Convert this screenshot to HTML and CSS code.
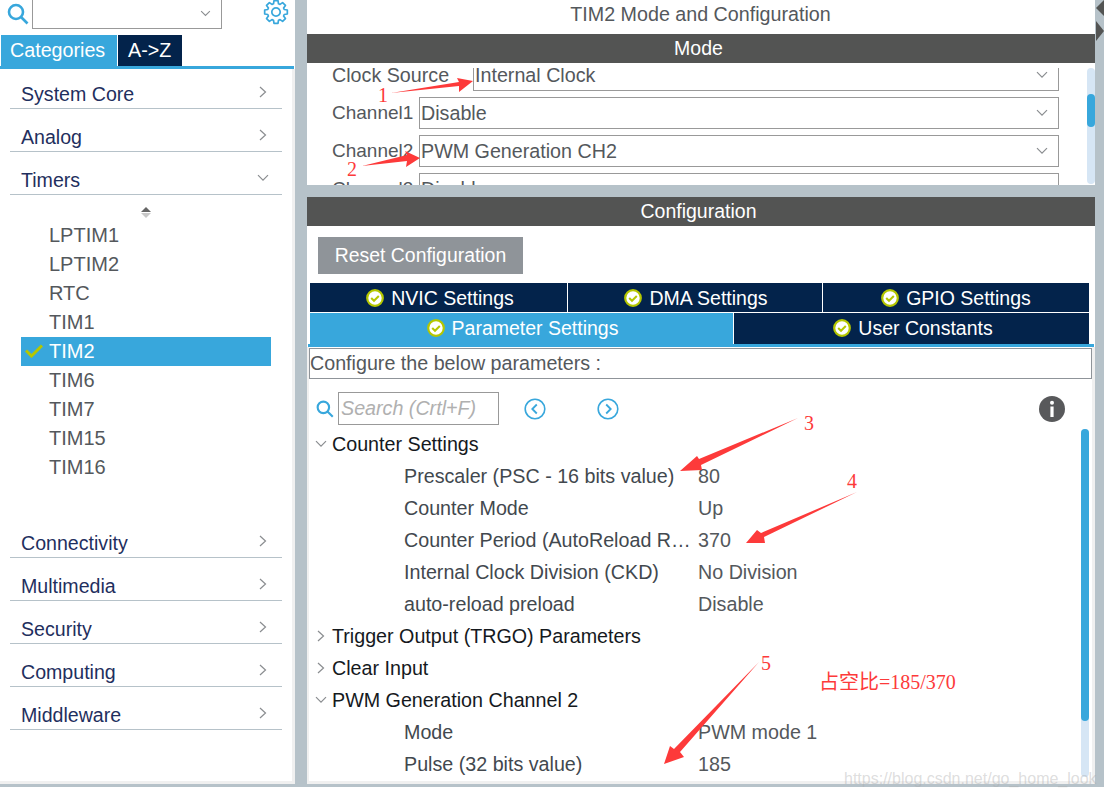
FILE: index.html
```html
<!DOCTYPE html>
<html lang="en">
<head>
    <meta charset="UTF-8">
    <meta name="viewport" content="width=device-width, initial-scale=1.0">
    <title>TIM2 Mode and Configuration</title>
    <link rel="stylesheet" href="styles.css">
</head>
<body>

    <!-- Shared icons -->
    <svg class="icon-defs" aria-hidden="true">
        <symbol id="chev-right" viewBox="0 0 8 12"><path d="M1 1l5.5 5L1 11" fill="none" stroke="#8a8d90" stroke-width="1.2"/></symbol>
        <symbol id="chev-down" viewBox="0 0 12 8"><path d="M1 1.2l5 5 5-5" fill="none" stroke="#8a8d90" stroke-width="1.2"/></symbol>
        <symbol id="ok" viewBox="0 0 18 18"><circle cx="9" cy="9" r="7.8" fill="#fff" stroke="#b5c700" stroke-width="2.2"/><path d="M5.2 9l2.8 2.8 4.8-4.8" fill="none" stroke="#b5c700" stroke-width="2"/></symbol>
        <symbol id="lens" viewBox="0 0 22 22"><circle cx="9" cy="9" r="7" fill="none" stroke="#38a7dc" stroke-width="2.6"/><path d="M14 14l6.5 6.5" stroke="#38a7dc" stroke-width="2.6"/></symbol>
    </svg>

    <div class="app">

        <!-- Left: categories -->
        <div class="sidebar">
            <div class="search-top">
                <svg class="lens-big"><use href="#lens"/></svg>
                <div class="combo">
                    <svg class="combo-chev"><use href="#chev-down"/></svg>
                </div>
                <svg class="gear" viewBox="-13 -13 26 26">
                    <polygon points="-2.51,-8.22 -2,-11.33 2,-11.33 2.51,-8.22 4.04,-7.59 6.6,-9.43 9.43,-6.6 7.59,-4.04 8.22,-2.51 11.33,-2 11.33,2 8.22,2.51 7.59,4.04 9.43,6.6 6.6,9.43 4.04,7.59 2.51,8.22 2,11.33 -2,11.33 -2.51,8.22 -4.04,7.59 -6.6,9.43 -9.43,6.6 -7.59,4.04 -8.22,2.51 -11.33,2 -11.33,-2 -8.22,-2.51 -7.59,-4.04 -9.43,-6.6 -6.6,-9.43 -4.04,-7.59" fill="none" stroke="#38a7dc" stroke-width="1.7" stroke-linejoin="round"/>
                    <circle r="4.2" fill="none" stroke="#38a7dc" stroke-width="1.7"/>
                </svg>
            </div>
            <div class="side-tabs">
                <div class="side-tab active">Categories</div>
                <div class="side-tab">A-&gt;Z</div>
            </div>
            <div class="blue-line"></div>

            <div class="cat-row"><span>System Core</span><svg class="chev-r"><use href="#chev-right"/></svg></div>
            <div class="cat-row"><span>Analog</span><svg class="chev-r"><use href="#chev-right"/></svg></div>
            <div class="cat-row"><span>Timers</span><svg class="chev-d"><use href="#chev-down"/></svg></div>

            <div class="timer-list">
                <div class="sort-icon"></div>
                <div class="timer">LPTIM1</div>
                <div class="timer">LPTIM2</div>
                <div class="timer">RTC</div>
                <div class="timer">TIM1</div>
                <div class="timer selected">
                    <svg class="tick" viewBox="0 0 18 14"><path d="M1 6.5l5.5 5.5L17 1.5" fill="none" stroke="#b5c700" stroke-width="3"/></svg>
                    TIM2
                </div>
                <div class="timer">TIM6</div>
                <div class="timer">TIM7</div>
                <div class="timer">TIM15</div>
                <div class="timer">TIM16</div>
            </div>

            <div class="cat-row"><span>Connectivity</span><svg class="chev-r"><use href="#chev-right"/></svg></div>
            <div class="cat-row"><span>Multimedia</span><svg class="chev-r"><use href="#chev-right"/></svg></div>
            <div class="cat-row"><span>Security</span><svg class="chev-r"><use href="#chev-right"/></svg></div>
            <div class="cat-row"><span>Computing</span><svg class="chev-r"><use href="#chev-right"/></svg></div>
            <div class="cat-row"><span>Middleware</span><svg class="chev-r"><use href="#chev-right"/></svg></div>
        </div>

        <!-- Right: mode and configuration -->
        <div class="main">
            <div class="title">TIM2 Mode and Configuration</div>
            <div class="bar">Mode</div>

            <div class="mode-pane">
                <div class="mode-scroll">
                    <div class="mode-row">
                        <div class="mode-label wide">Clock Source</div>
                        <div class="select">Internal Clock<svg class="select-chev"><use href="#chev-down"/></svg></div>
                    </div>
                    <div class="mode-row">
                        <div class="mode-label">Channel1</div>
                        <div class="select">Disable<svg class="select-chev"><use href="#chev-down"/></svg></div>
                    </div>
                    <div class="mode-row">
                        <div class="mode-label">Channel2</div>
                        <div class="select">PWM Generation CH2<svg class="select-chev"><use href="#chev-down"/></svg></div>
                    </div>
                    <div class="mode-row">
                        <div class="mode-label">Channel3</div>
                        <div class="select">Disable<svg class="select-chev"><use href="#chev-down"/></svg></div>
                    </div>
                </div>
                <div class="mode-track"><div class="mode-thumb"></div></div>
            </div>

            <div class="bar config-bar">Configuration</div>

            <div class="config">
                <div class="reset-btn">Reset Configuration</div>

                <div class="tabs">
                    <div class="tab-row first">
                        <div class="tab nvic"><svg class="ok"><use href="#ok"/></svg>NVIC Settings</div>
                        <div class="tab dma"><svg class="ok"><use href="#ok"/></svg>DMA Settings</div>
                        <div class="tab gpio"><svg class="ok"><use href="#ok"/></svg>GPIO Settings</div>
                    </div>
                    <div class="tab-row">
                        <div class="tab param active"><svg class="ok"><use href="#ok"/></svg>Parameter Settings</div>
                        <div class="tab user"><svg class="ok"><use href="#ok"/></svg>User Constants</div>
                    </div>
                </div>
                <div class="tab-line"></div>

                <div class="config-body">
                    <div class="hint">Configure the below parameters :</div>

                    <div class="search-row">
                        <svg class="lens-small"><use href="#lens"/></svg>
                        <div class="search-box">Search (Crtl+F)</div>
                        <svg class="nav first-nav" viewBox="0 0 22 22"><circle cx="11" cy="11" r="9.8" fill="none" stroke="#38a7dc" stroke-width="1.6"/><path d="M12.8 6.5L8.3 11l4.5 4.5" fill="none" stroke="#38a7dc" stroke-width="1.8"/></svg>
                        <svg class="nav" viewBox="0 0 22 22"><circle cx="11" cy="11" r="9.8" fill="none" stroke="#38a7dc" stroke-width="1.6"/><path d="M9.2 6.5l4.5 4.5-4.5 4.5" fill="none" stroke="#38a7dc" stroke-width="1.8"/></svg>
                        <svg class="info" viewBox="0 0 26 26"><circle cx="13" cy="13" r="13" fill="#58595b"/><circle cx="13" cy="6.8" r="2" fill="#fff"/><rect x="11.4" y="10.5" width="3.2" height="10.5" fill="#fff"/></svg>
                    </div>

                    <div class="tree">
                        <div class="group"><svg class="t-down"><use href="#chev-down"/></svg>Counter Settings</div>
                        <div class="param-row"><div class="param-name">Prescaler (PSC - 16 bits value)</div><div>80</div></div>
                        <div class="param-row"><div class="param-name">Counter Mode</div><div>Up</div></div>
                        <div class="param-row"><div class="param-name">Counter Period (AutoReload Register)</div><div>370</div></div>
                        <div class="param-row"><div class="param-name">Internal Clock Division (CKD)</div><div>No Division</div></div>
                        <div class="param-row"><div class="param-name">auto-reload preload</div><div>Disable</div></div>
                        <div class="group"><svg class="t-right"><use href="#chev-right"/></svg>Trigger Output (TRGO) Parameters</div>
                        <div class="group"><svg class="t-right"><use href="#chev-right"/></svg>Clear Input</div>
                        <div class="group"><svg class="t-down"><use href="#chev-down"/></svg>PWM Generation Channel 2</div>
                        <div class="param-row"><div class="param-name">Mode</div><div>PWM mode 1</div></div>
                        <div class="param-row"><div class="param-name">Pulse (32 bits value)</div><div>185</div></div>
                    </div>
                    <div class="tree-track"><div class="tree-thumb"></div></div>
                </div>
            </div>
        </div>

        <!-- Split handles -->
        <div class="handle-left"></div>
        <div class="handle-right"></div>
    </div>

    <!-- Red annotations drawn over the screenshot -->
    <svg class="marks" viewBox="0 0 1104 797">
        <g fill="#fd3a3a">
            <polygon points="391,93 459,82 457,78 473,81 459,92 459,86"/>
            <polygon points="362,166 407,155 405,151 420,158 406,167 407,161"/>
            <polygon points="798,418 699,459 697,456 680,471 702,470 701,465"/>
            <polygon points="857,492 761,533 757,530 746,543 765,543 764,537"/>
            <polygon points="759,662 674,749 670,746 664,764 684,757 680,752"/>
        </g>
    </svg>
    <span class="note n1">1</span>
    <span class="note n2">2</span>
    <span class="note n3">3</span>
    <span class="note n4">4</span>
    <span class="note n5">5</span>
    <span class="note duty">占空比=185/370</span>
    <span class="watermark">https://blog.csdn.net/go_home_look</span>

</body>
</html>
```

FILE: styles.css
```css
* {
    margin: 0;
    padding: 0;
    box-sizing: border-box;
}

body {
    position: relative;
    width: 1104px;
    height: 797px;
    overflow: hidden;
    background-color: #fff;
    font-family: 'Liberation Sans', Arial, sans-serif;
    font-size: 19.7px;
    color: #54585c;
}

.icon-defs {
    position: absolute;
    width: 0;
    height: 0;
}

.app {
    position: relative;
    display: flex;
    height: 787px;
    padding-bottom: 3px;
    background-color: #b6c2c9;
}

/* Sidebar */
.sidebar {
    width: 295px;
    margin-right: 12px;
    background: linear-gradient(#f0f0f0, #f0f0f0) right 69px / 3px 100% no-repeat #fff;
    border-bottom: 3px solid #f0f0f0;
}

.search-top {
    display: flex;
    height: 35px;
}

.lens-big {
    width: 22px;
    height: 22px;
    margin: 3px 0 0 7px;
}

.combo {
    position: relative;
    width: 190px;
    height: 30px;
    margin: -1px 0 0 3px;
    border: 1px solid #999;
}

.combo-chev {
    position: absolute;
    right: 10px;
    top: 10px;
    width: 11px;
    height: 7px;
}

.gear {
    width: 26px;
    height: 26px;
    margin: -1px 0 0 41px;
}

.side-tabs {
    display: flex;
    gap: 1px;
    height: 31px;
    padding-left: 1px;
}

.side-tab {
    width: 64px;
    padding-left: 10px;
    background-color: #03234b;
    color: #fff;
    line-height: 30px;
}

.side-tab.active {
    width: 116px;
    padding-left: 9px;
    background-color: #38a7dc;
}

.blue-line {
    width: 294px;
    height: 3px;
    background-color: #38a7dc;
}

.cat-row {
    display: flex;
    align-items: center;
    justify-content: space-between;
    height: 31px;
    margin: 12px 13px 0 10px;
    padding: 2px 15px 0 11px;
    border-bottom: 1px solid #b6c2c9;
    color: #1f2f5e;
    font-size: 19.6px;
}

.blue-line + .cat-row {
    margin-top: 9px;
}

.chev-r {
    width: 8px;
    height: 12px;
    margin-bottom: 5px;
}

.chev-d {
    width: 12px;
    height: 8px;
    margin: 0 -2px 5px 0;
}

.timer-list {
    width: 250px;
    margin: 0 0 45px 21px;
    font-size: 20px;
}

.sort-icon {
    position: relative;
    height: 26px;
}

.sort-icon::before,
.sort-icon::after {
    content: '';
    position: absolute;
    left: 120px;
    border-left: 5px solid transparent;
    border-right: 5px solid transparent;
}

.sort-icon::before {
    top: 12px;
    border-bottom: 5px solid #666;
}

.sort-icon::after {
    top: 18px;
    border-top: 5px solid #c8c8c8;
}

.timer {
    position: relative;
    height: 29px;
    padding-left: 28px;
    line-height: 28px;
}

.timer.selected {
    background-color: #38a7dc;
    color: #fff;
}

.tick {
    position: absolute;
    left: 4px;
    top: 7px;
    width: 18px;
    height: 14px;
}

/* Main column */
.main {
    display: flex;
    flex-direction: column;
    width: 788px;
}

.title {
    height: 34px;
    padding-right: 1px;
    background-color: #fff;
    text-align: center;
    line-height: 28px;
}

.bar {
    height: 29px;
    padding-right: 5px;
    background-color: #535453;
    color: #fff;
    text-align: center;
    font-size: 19.5px;
    line-height: 28px;
}

.mode-pane {
    position: relative;
    height: 122px;
    padding-top: 5px;
    background-color: #fff;
}

.mode-scroll {
    height: 117px;
    overflow: hidden;
    padding: 0 36px 0 25px;
}

.mode-row {
    display: flex;
    align-items: center;
    height: 32px;
    margin-bottom: 6px;
}

.mode-row:first-child {
    margin-top: -9px;
}

.mode-label {
    width: 87px;
    flex-shrink: 0;
    font-size: 19px;
}

.mode-label.wide {
    width: 141px;
    font-size: 19.7px;
}

.select {
    position: relative;
    flex: 1;
    height: 32px;
    padding-left: 1px;
    border: 1px solid #999;
    line-height: 30px;
}

.select-chev {
    position: absolute;
    right: 10px;
    top: 11px;
    width: 12px;
    height: 8px;
}

.mode-track {
    position: absolute;
    right: 0;
    top: 5px;
    width: 8px;
    height: 116px;
    border-radius: 4px;
    background-color: #d6e6f5;
}

.mode-thumb {
    height: 33px;
    margin-top: 26px;
    border-radius: 4px;
    background-color: #38a7dc;
}

.config-bar {
    margin-top: 12px;
}

/* Configuration */
.config {
    display: flex;
    flex-direction: column;
    flex: 1;
    overflow: hidden;
    background-color: #fff;
    border-bottom: 3px solid #f0f0f0;
}

.reset-btn {
    width: 205px;
    height: 37px;
    margin: 11px 0 9px 11px;
    background-color: #8f9499;
    color: #fff;
    text-align: center;
    font-size: 19.4px;
    line-height: 36px;
}

.tabs {
    display: flex;
    flex-direction: column;
    gap: 1px;
    width: 779px;
    margin-left: 3px;
    font-size: 19.5px;
}

.tab-row {
    display: flex;
    gap: 1px;
    height: 31px;
}

.tab-row.first {
    height: 29px;
}

.tab {
    display: flex;
    align-items: center;
    justify-content: center;
    gap: 7px;
    background-color: #03234b;
    color: #fff;
}

.tab-row.first .tab {
    padding-top: 2px;
}

.tab .ok {
    margin-top: -1px;
}

.tab.nvic { width: 257px; padding-left: 3px; }
.tab.dma { width: 254px; padding-left: 2px; }
.tab.gpio { width: 266px; }
.tab.param { width: 423px; padding-left: 2px; }
.tab.user { width: 355px; padding-left: 3px; }

.tab.active {
    background-color: #38a7dc;
}

.ok {
    width: 18px;
    height: 18px;
}

.tab-line {
    width: 786px;
    height: 3px;
    margin-left: 1px;
    background-color: #38a7dc;
}

.config-body {
    position: relative;
    flex: 1;
    border-left: 2px solid #f0f0f0;
    border-right: 3px solid #f0f0f0;
}

.hint {
    width: 783px;
    height: 31px;
    margin-top: 1px;
    border: 1px solid #8f9499;
    line-height: 28px;
}

.search-row {
    display: flex;
    align-items: center;
    height: 33px;
    margin: 13px 0 3px;
    padding-left: 7px;
}

.lens-small {
    width: 18px;
    height: 18px;
}

.search-box {
    width: 161px;
    height: 33px;
    margin-left: 4px;
    padding-left: 2px;
    border: 1px solid #999;
    color: #b0b0b0;
    font-style: italic;
    line-height: 30px;
}

.nav {
    width: 22px;
    height: 22px;
    margin-left: 51px;
}

.nav.first-nav {
    margin-left: 25px;
}

.info {
    width: 26px;
    height: 26px;
    margin-left: 420px;
}

.tree {
    width: 772px;
}

.group,
.param-row {
    display: flex;
    align-items: center;
    height: 32px;
    white-space: nowrap;
}

.group {
    padding-left: 23px;
    color: #15191d;
}

.t-down {
    width: 12px;
    height: 8px;
    margin: 0 5px 0 -17px;
    flex-shrink: 0;
}

.t-right {
    width: 8px;
    height: 12px;
    margin: 0 7px 0 -15px;
    flex-shrink: 0;
}

.param-row {
    padding-left: 95px;
    color: #54585c;
}

.param-name {
    width: 291px;
    margin-right: 3px;
    overflow: hidden;
    text-overflow: ellipsis;
    color: #42484e;
}

.tree-track {
    position: absolute;
    left: 772px;
    top: 82px;
    width: 8px;
    height: 348px;
    border-radius: 4px;
    background-color: #d6e6f5;
}

.tree-thumb {
    height: 292px;
    border-radius: 4px;
    background-color: #38a7dc;
}

/* Split handles at the top right */
.handle-left,
.handle-right {
    position: absolute;
    border-top: 8px solid transparent;
    border-bottom: 8px solid transparent;
}

.handle-left {
    right: 0;
    top: 0;
    border-right: 8px solid #535453;
}

.handle-right {
    right: 0;
    top: 21px;
    border-top-width: 10px;
    border-bottom-width: 10px;
    border-left: 8px solid #535453;
}

/* Annotations */
.marks {
    position: absolute;
    left: 0;
    top: 0;
    width: 1104px;
    height: 797px;
}

.note {
    position: absolute;
    color: #fd3a3a;
    font-family: 'Liberation Serif', 'Noto Sans CJK SC', serif;
    font-size: 20px;
    line-height: 24px;
    white-space: nowrap;
}

.n1 { left: 378px; top: 83px; }
.n2 { left: 347px; top: 157px; }
.n3 { left: 804px; top: 411px; }
.n4 { left: 847px; top: 469px; }
.n5 { left: 761px; top: 651px; }
.duty { left: 819px; top: 670px; }

.watermark {
    position: absolute;
    left: 844px;
    top: 767px;
    color: rgba(170, 170, 170, 0.4);
    font-size: 16px;
    line-height: 24px;
    white-space: nowrap;
}
```
